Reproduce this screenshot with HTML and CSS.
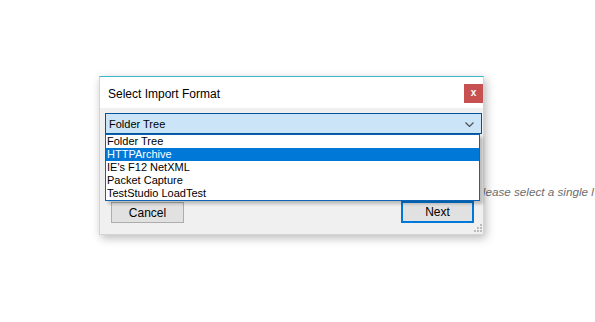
FILE: index.html
```html
<!DOCTYPE html>
<html lang="en">

<head>
    <meta charset="UTF-8">
    <meta name="viewport" content="width=device-width, initial-scale=1.0">
    <title>Select Import Format</title>
    <link rel="stylesheet" href="styles.css">
</head>

<body>
    <p class="hint">Please select a single l</p>

    <div class="dialog">
        <div class="titlebar">
            <span class="title">Select Import Format</span>
            <span class="close">x</span>
        </div>

        <div class="dialog-body">
            <div class="combo">
                <span class="combo-value">Folder Tree</span>
                <svg class="chevron" width="9" height="5" viewBox="0 0 9 5">
                    <path d="M0.5 0.5 L4.5 4.5 L8.5 0.5" fill="none" stroke="#505050" stroke-width="1.2"/>
                </svg>

                <ul class="dropdown">
                    <li>Folder Tree</li>
                    <li class="selected">HTTPArchive</li>
                    <li>IE's F12 NetXML</li>
                    <li>Packet Capture</li>
                    <li>TestStudio LoadTest</li>
                </ul>
            </div>

            <div class="buttons">
                <button class="btn">Cancel</button>
                <button class="btn btn-default">Next</button>
            </div>

            <svg class="grip" width="8" height="8" viewBox="0 0 8 8">
                <rect x="6" y="0" width="2" height="2" fill="#bcbcbc"/>
                <rect x="3" y="3" width="2" height="2" fill="#bcbcbc"/>
                <rect x="6" y="3" width="2" height="2" fill="#bcbcbc"/>
                <rect x="0" y="6" width="2" height="2" fill="#bcbcbc"/>
                <rect x="3" y="6" width="2" height="2" fill="#bcbcbc"/>
                <rect x="6" y="6" width="2" height="2" fill="#bcbcbc"/>
            </svg>
        </div>
    </div>
</body>

</html>
```

FILE: styles.css
```css
body {
    margin: 0;
    width: 595px;
    height: 322px;
    background: white;
    font-family: "Liberation Sans", Arial, sans-serif;
    overflow: hidden;
}

.hint {
    margin: 0;
    padding: 185px 0 0 475px;
    font-size: 11.7px;
    font-style: italic;
    color: #6d6d6d;
    white-space: nowrap;
}

/* window sits on the desktop */
.dialog {
    position: absolute;
    left: 99px;
    top: 76px;
    width: 383px;
    height: 157px;
    border: 1px solid #d4d4d4;
    border-top-color: #3cb6c6;
    background: #f0f0f0;
    box-shadow: 2px 3px 9px rgba(0, 0, 0, 0.28);
    display: flex;
    flex-direction: column;
}

.titlebar {
    height: 31px;
    background: white;
    display: flex;
    align-items: center;
    justify-content: space-between;
    padding: 0 0 0 8px;
}

.title {
    font-size: 12px;
    color: #000;
    margin-top: 2px;
}

.close {
    width: 19px;
    height: 19px;
    margin: 2px 0 0 0;
    background: #c75050;
    color: white;
    font-size: 10px;
    font-weight: bold;
    display: flex;
    align-items: center;
    justify-content: center;
    line-height: 1;
    padding-bottom: 1px;
    box-sizing: border-box;
}

.dialog-body {
    flex: 1;
    position: relative;
    padding: 5px 0 0 5px;
}

.combo {
    position: relative;
    height: 19px;
    border: 1px solid #005499;
    background: #cce4f7;
    display: flex;
    align-items: center;
    justify-content: space-between;
    padding: 0 7px 0 3px;
    width: 365px;
}

.combo-value {
    font-size: 11px;
    color: #000;
}

.chevron {
    margin-top: 1px;
}

.dropdown {
    position: absolute;
    left: -1px;
    top: 20px;
    width: 373px;
    margin: 0;
    padding: 0;
    list-style: none;
    background: white;
    border: 1px solid #0e64b4;
    box-shadow: 3px 3px 3px rgba(0, 0, 0, 0.22);
    z-index: 2;
}

.dropdown li {
    height: 13px;
    line-height: 13px;
    padding-left: 1px;
    font-size: 11px;
    color: #000;
}

.dropdown li.selected {
    background: #0078d7;
    color: white;
}

.buttons {
    display: flex;
    justify-content: space-between;
    margin-top: 67px;
    padding: 0 9px 0 6px;
    align-items: flex-start;
}

.btn {
    width: 73px;
    height: 21px;
    margin-top: 1px;
    border: 1px solid #adadad;
    background: #e1e1e1;
    font-family: "Liberation Sans", Arial, sans-serif;
    font-size: 12px;
    color: #000;
    padding: 0;
}

.btn-default {
    height: 22px;
    margin-top: 0;
    border: 2px solid #0078d7;
}

.grip {
    position: absolute;
    right: 1px;
    bottom: 2px;
}
```
